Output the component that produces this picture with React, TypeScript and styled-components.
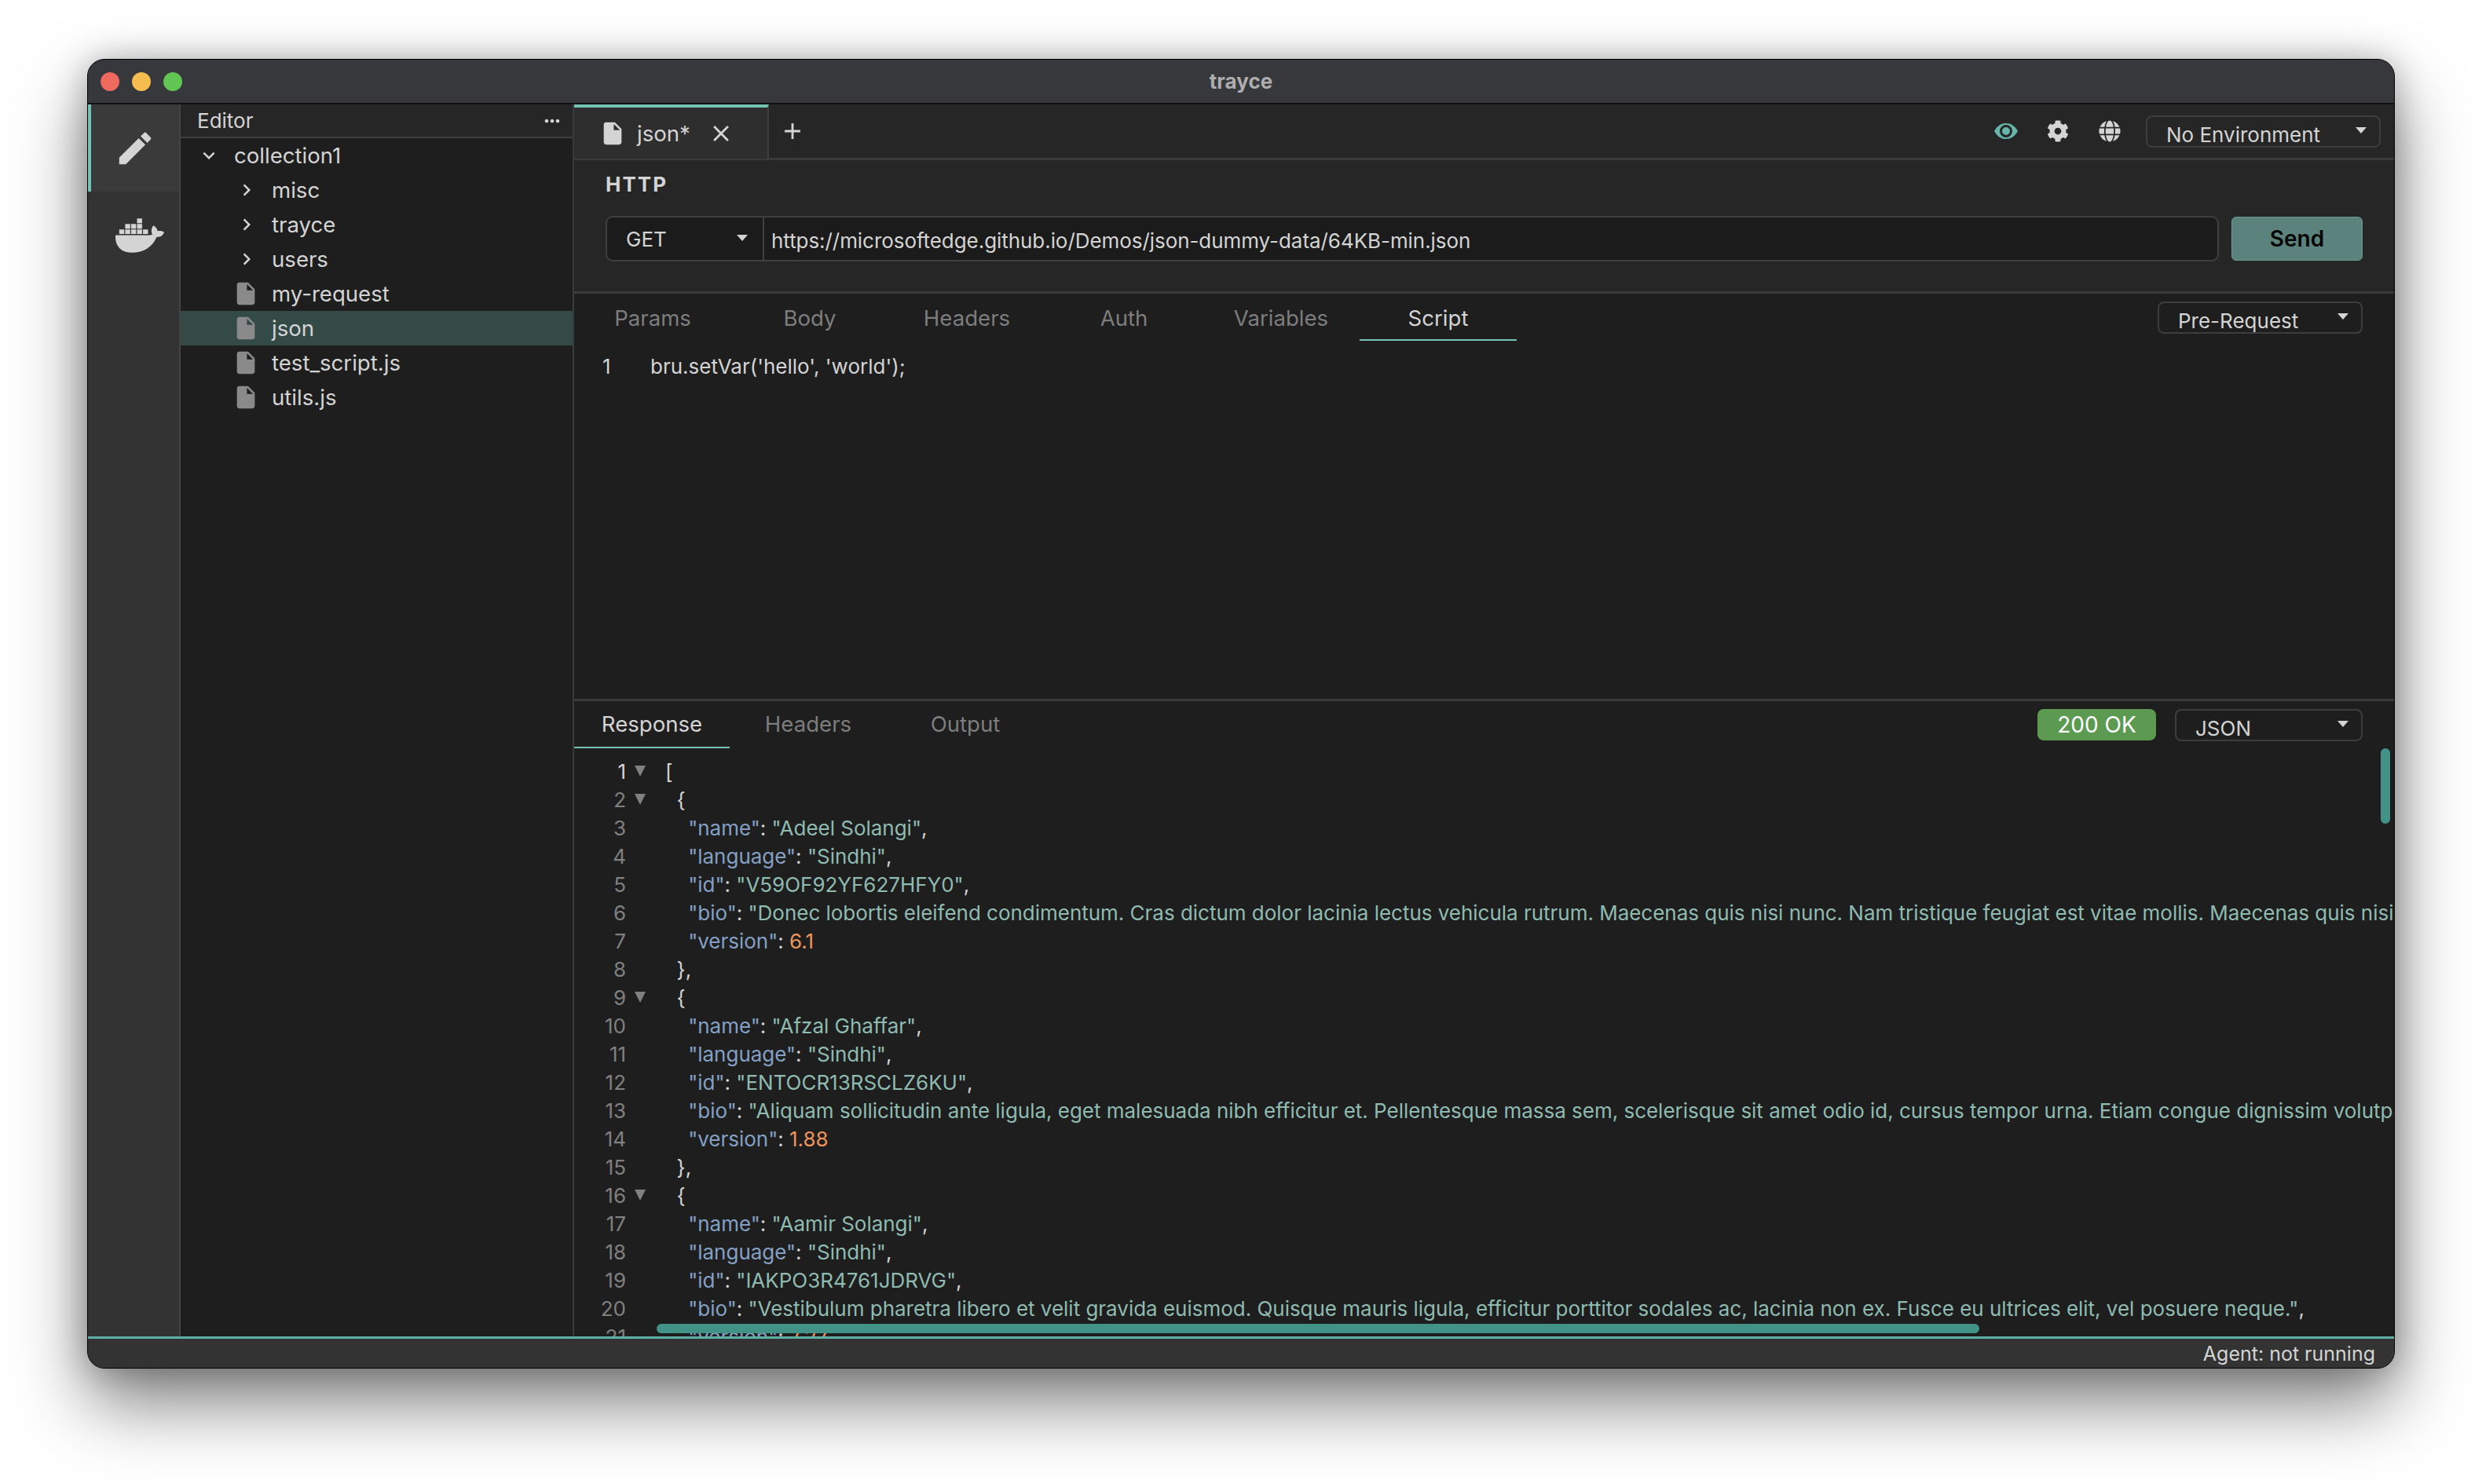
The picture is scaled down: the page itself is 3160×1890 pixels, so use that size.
import React from "react";
import styled, { createGlobalStyle } from "styled-components";
import { FaCog, FaDocker, FaGlobe } from "react-icons/fa";
import {
  MdAdd,
  MdChevronRight,
  MdClose,
  MdEdit,
  MdExpandMore,
  MdInsertDriveFile,
  MdMoreHoriz,
} from "react-icons/md";

const GlobalStyle = createGlobalStyle`
  html, body {
    margin: 0;
    padding: 0;
    background: #ffffff;
  }
  * {
    box-sizing: border-box;
  }
  body {
    font-family: Inter, "Noto Sans", sans-serif;
    -webkit-font-smoothing: antialiased;
  }
`;

const Page = styled.div`
  width: 3160px;
  height: 1890px;
  padding: 75px 111px 0 111px;
  overflow: hidden;
`;

const Window = styled.div`
  width: 2938px;
  height: 1668px;
  display: flex;
  flex-direction: column;
  border-radius: 22px;
  overflow: hidden;
  background: #1e1e1e;
  border: 1px solid #000;
  box-shadow: inset 0 0 0 1px #555, 0 44px 90px rgba(0, 0, 0, 0.5), 0 0 40px rgba(0, 0, 0, 0.25);
`;

const TitleBar = styled.div`
  position: relative;
  flex: 0 0 57px;
  display: flex;
  align-items: center;
  justify-content: center;
  background: #37383b;
  border-bottom: 2px solid #111;
`;

const Lights = styled.div`
  position: absolute;
  left: 16px;
  top: 16px;
  display: flex;
  gap: 16px;
`;

const Light = styled.span<{ $color: string }>`
  width: 24px;
  height: 24px;
  border-radius: 50%;
  background: ${(p) => p.$color};
`;

const Title = styled.div`
  font-size: 26px;
  font-weight: 700;
  color: #adadaf;
`;

const Body = styled.div`
  flex: 1;
  min-height: 0;
  display: flex;
`;

const ActivityBar = styled.div`
  flex: 0 0 118px;
  display: flex;
  flex-direction: column;
  background: #333333;
  border-right: 2px solid #444;
`;

const ActivityItem = styled.div<{ $active?: boolean }>`
  height: 111px;
  display: flex;
  align-items: center;
  justify-content: center;
  color: #d4d4d4;
  background: ${(p) => (p.$active ? "#3a3a3a" : "transparent")};
  border-left: 4px solid ${(p) => (p.$active ? "#74c2b6" : "transparent")};
`;

const DockerIcon = styled(FaDocker)`
  margin-left: 11px;
`;

const Sidebar = styled.div`
  flex: 0 0 501px;
  display: flex;
  flex-direction: column;
  background: #1e1e1e;
  border-right: 2px solid #3a3a3a;
`;

const SidebarHeader = styled.div`
  height: 43px;
  display: flex;
  align-items: center;
  justify-content: space-between;
  padding: 0 12px 0 21px;
  background: #262626;
  border-bottom: 2px solid #3d3d3d;
  font-size: 26px;
  color: #d4d4d4;
`;

const TreeRow = styled.div<{ $depth: number; $selected?: boolean }>`
  height: 44px;
  display: flex;
  align-items: center;
  padding-left: ${(p) => (p.$depth === 0 ? 21 : 69)}px;
  font-size: 27.6px;
  color: #d4d4d4;
  background: ${(p) => (p.$selected ? "#334a47" : "transparent")};
`;

const TreeIcon = styled.span`
  flex: 0 0 auto;
  width: 47px;
  display: flex;
  align-items: center;
  color: #d4d4d4;
`;

const FileIcon = styled(MdInsertDriveFile)`
  color: #8a8a8a;
  margin-left: -3px;
`;

const Main = styled.div`
  flex: 1;
  min-width: 0;
  display: flex;
  flex-direction: column;
`;

const TabBar = styled.div`
  flex: 0 0 71px;
  display: flex;
  align-items: stretch;
  background: #262626;
  border-bottom: 3px solid #3a3a3a;
`;

const FileTab = styled.div`
  width: 248px;
  display: flex;
  align-items: center;
  padding-left: 32px;
  margin-bottom: -1px;
  background: #2e2e2e;
  border-top: 4px solid #74c2b6;
  border-right: 2px solid #3d3d3d;
  font-size: 27.6px;
  color: #d4d4d4;
`;

const TabName = styled.span`
  margin-left: 14px;
  width: 90px;
`;

const AddTab = styled.div`
  width: 60px;
  display: flex;
  align-items: center;
  justify-content: center;
  color: #d4d4d4;
`;

const TabBarActions = styled.div`
  margin-left: auto;
  display: flex;
  align-items: center;
  padding-right: 17px;
  color: #d4d4d4;
`;

const ActionIcon = styled.span<{ $color?: string }>`
  width: 66px;
  display: flex;
  justify-content: center;
  color: ${(p) => p.$color ?? "#d4d4d4"};
`;

const Dropdown = styled.div<{ $width: number }>`
  width: ${(p) => p.$width}px;
  height: 41px;
  display: flex;
  align-items: flex-end;
  justify-content: space-between;
  padding: 0 16px 0 24px;
  border: 2px solid #3d3d3d;
  border-radius: 8px;
  font-size: 26px;
  line-height: 29px;
  color: #d4d4d4;
  overflow: hidden;
`;

const EnvDropdown = styled(Dropdown)`
  margin-left: 13px;
`;

const Caret = styled.span`
  align-self: center;
  margin-top: -3px;
  width: 0;
  height: 0;
  border-left: 7px solid transparent;
  border-right: 7px solid transparent;
  border-top: 8px solid #d4d4d4;
`;

const RequestPanel = styled.div`
  flex: 0 0 170px;
  padding: 15px 40px 0;
  background: #262626;
  border-bottom: 3px solid #3a3a3a;
`;

const SectionTitle = styled.div`
  font-size: 26px;
  line-height: 32px;
  font-weight: 700;
  letter-spacing: 2px;
  color: #d4d4d4;
`;

const UrlRow = styled.div`
  margin-top: 24px;
  display: flex;
  align-items: center;
  gap: 16px;
`;

const UrlField = styled.div`
  flex: 1;
  height: 58px;
  display: flex;
  background: #1b1b1b;
  border: 2px solid #3f3f3f;
  border-radius: 9px;
  font-size: 26px;
  color: #d4d4d4;
`;

const MethodSelect = styled.div`
  flex: 0 0 200px;
  display: flex;
  align-items: center;
  justify-content: space-between;
  padding: 0 19px 0 24px;
  border-right: 2px solid #3f3f3f;
`;

const UrlText = styled.div`
  padding: 4px 0 0 9px;
  display: flex;
  align-items: center;
  letter-spacing: -0.06px;
`;

const SendButton = styled.div`
  flex: 0 0 167px;
  height: 56px;
  display: flex;
  align-items: center;
  justify-content: center;
  background: #5b827c;
  border: 1px solid #6d9a93;
  border-radius: 6px;
  font-size: 28px;
  font-weight: 600;
  color: #050505;
`;

const TabRow = styled.div`
  flex: 0 0 60px;
  display: flex;
  align-items: stretch;
  background: #1e1e1e;
`;

const PanelTab = styled.div<{ $active?: boolean; $width?: number }>`
  width: ${(p) => p.$width ?? 200}px;
  display: flex;
  align-items: center;
  justify-content: center;
  font-size: 27.6px;
  color: ${(p) => (p.$active ? "#d4d4d4" : "#7d7d7d")};
  border-bottom: 2px solid ${(p) => (p.$active ? "#74c2b6" : "transparent")};
`;

const RequestTab = styled(PanelTab)`
  padding-top: 3px;
`;

const RowEnd = styled.div`
  margin-left: auto;
  display: flex;
  align-items: center;
  gap: 24px;
  padding-right: 40px;
`;

const EditorPane = styled.div`
  flex: 1;
  min-height: 0;
  display: flex;
  flex-direction: column;
  background: #1e1e1e;
  border-bottom: 3px solid #3a3a3a;
`;

const ScriptRow = styled.div`
  flex: 0 0 60px;
  padding: 17px 0 0 36px;
  display: flex;
  font-size: 26px;
  line-height: 32px;
  color: #d4d4d4;
`;

const ScriptLineNo = styled.span`
  width: 61px;
`;

const ResponsePane = styled.div`
  flex: 0 0 809px;
  min-height: 0;
  display: flex;
  flex-direction: column;
  background: #1e1e1e;
`;

const CodeView = styled.div`
  position: relative;
  flex: 1;
  min-height: 0;
  padding-top: 12px;
  overflow: hidden;
`;

const CodeLine = styled.div`
  height: 36px;
  display: flex;
  font-size: 26px;
  line-height: 36px;
  letter-spacing: -0.02px;
  white-space: pre;
`;

const LineNo = styled.span<{ $current?: boolean }>`
  flex: 0 0 66px;
  text-align: right;
  color: ${(p) => (p.$current ? "#d4d4d4" : "#808080")};
`;

const FoldSlot = styled.span`
  flex: 0 0 50px;
  padding: 10px 0 0 11px;
`;

const FoldMark = styled.span`
  display: block;
  width: 0;
  height: 0;
  border-left: 7px solid transparent;
  border-right: 7px solid transparent;
  border-top: 14px solid #808080;
`;

const Key = styled.span`
  color: #84a0c4;
`;

const Str = styled.span`
  color: #8fbbb1;
`;

const Num = styled.span`
  color: #ef955c;
`;

const Punct = styled.span`
  color: #d4d4d4;
`;

const VScrollThumb = styled.div`
  position: absolute;
  top: 0;
  right: 5px;
  width: 12px;
  height: 96px;
  border-radius: 6px;
  background: #429287;
`;

const HScrollThumb = styled.div`
  position: absolute;
  left: 105px;
  bottom: 4px;
  width: 1684px;
  height: 12px;
  border-radius: 6px;
  background: #429287;
`;

const StatusBadge = styled.div`
  width: 151px;
  height: 40px;
  display: flex;
  align-items: center;
  justify-content: center;
  border-radius: 8px;
  background: #5b9a50;
  font-size: 28px;
  color: #fff;
`;

const StatusBar = styled.div`
  flex: 0 0 40px;
  display: flex;
  align-items: center;
  justify-content: flex-end;
  padding-right: 24px;
  background: #333333;
  border-top: 3px solid #5fb0a4;
  font-size: 25px;
  color: #d4d4d4;
`;

const EyeIcon = () => (
  <svg width="30" height="20" viewBox="0 0 30 20">
    <path d="M0 10C4 3 9 0 15 0s11 3 15 10c-4 7-9 10-15 10S4 17 0 10z" fill="currentColor" />
    <circle cx="15" cy="10" r="6.5" fill="none" stroke="#262626" strokeWidth="3" />
  </svg>
);

type Token = [kind: "k" | "s" | "n" | "p", text: string];

const entry = (
  name: string,
  id: string,
  bio: string,
  version: string,
  last: string
): Token[][] => [
  [["p", "  {"]],
  [["p", "    "], ["k", '"name"'], ["p", ": "], ["s", `"${name}"`], ["p", ","]],
  [["p", "    "], ["k", '"language"'], ["p", ": "], ["s", '"Sindhi"'], ["p", ","]],
  [["p", "    "], ["k", '"id"'], ["p", ": "], ["s", `"${id}"`], ["p", ","]],
  [["p", "    "], ["k", '"bio"'], ["p", ": "], ["s", `"${bio}"`], ["p", ","]],
  [["p", "    "], ["k", '"version"'], ["p", ": "], ["n", version]],
  [["p", last]],
];

const codeLines: Token[][] = [
  [["p", "["]],
  ...entry(
    "Adeel Solangi",
    "V59OF92YF627HFY0",
    "Donec lobortis eleifend condimentum. Cras dictum dolor lacinia lectus vehicula rutrum. Maecenas quis nisi nunc. Nam tristique feugiat est vitae mollis. Maecenas quis nisi nunc.",
    "6.1",
    "  },"
  ),
  ...entry(
    "Afzal Ghaffar",
    "ENTOCR13RSCLZ6KU",
    "Aliquam sollicitudin ante ligula, eget malesuada nibh efficitur et. Pellentesque massa sem, scelerisque sit amet odio id, cursus tempor urna. Etiam congue dignissim volutpat. Vestibulum pharetra libero et velit gravida euismod.",
    "1.88",
    "  },"
  ),
  ...entry(
    "Aamir Solangi",
    "IAKPO3R4761JDRVG",
    "Vestibulum pharetra libero et velit gravida euismod. Quisque mauris ligula, efficitur porttitor sodales ac, lacinia non ex. Fusce eu ultrices elit, vel posuere neque.",
    "7.27",
    "  },"
  ),
];

const foldLines = [1, 2, 9, 16];

const renderToken = ([kind, text]: Token, i: number) => {
  if (kind === "k") return <Key key={i}>{text}</Key>;
  if (kind === "s") return <Str key={i}>{text}</Str>;
  if (kind === "n") return <Num key={i}>{text}</Num>;
  return <Punct key={i}>{text}</Punct>;
};

const treeItems = [
  { name: "misc", folder: true },
  { name: "trayce", folder: true },
  { name: "users", folder: true },
  { name: "my-request" },
  { name: "json", selected: true },
  { name: "test_script.js" },
  { name: "utils.js" },
];

const App = () => {
  return (
    <Page>
      <GlobalStyle />
      <Window>
        <TitleBar>
          <Lights>
            <Light $color="#ee6a5f" />
            <Light $color="#f5bd4f" />
            <Light $color="#61c554" />
          </Lights>
          <Title>trayce</Title>
        </TitleBar>
        <Body>
          <ActivityBar>
            <ActivityItem $active>
              <MdEdit size={54} />
            </ActivityItem>
            <ActivityItem>
              <DockerIcon size={62} />
            </ActivityItem>
          </ActivityBar>
          <Sidebar>
            <SidebarHeader>
              Editor
              <MdMoreHoriz size={28} />
            </SidebarHeader>
            <TreeRow $depth={0}>
              <TreeIcon>
                <MdExpandMore size={30} />
              </TreeIcon>
              collection1
            </TreeRow>
            {treeItems.map((item) => (
              <TreeRow key={item.name} $depth={1} $selected={item.selected}>
                <TreeIcon>
                  {item.folder ? <MdChevronRight size={30} /> : <FileIcon size={34} />}
                </TreeIcon>
                {item.name}
              </TreeRow>
            ))}
          </Sidebar>
          <Main>
            <TabBar>
              <FileTab>
                <MdInsertDriveFile size={34} />
                <TabName>json*</TabName>
                <MdClose size={34} />
              </FileTab>
              <AddTab>
                <MdAdd size={34} />
              </AddTab>
              <TabBarActions>
                <ActionIcon $color="#66b5a9">
                  <EyeIcon />
                </ActionIcon>
                <ActionIcon>
                  <FaCog size={28} />
                </ActionIcon>
                <ActionIcon>
                  <FaGlobe size={28} />
                </ActionIcon>
                <EnvDropdown $width={299}>
                  No Environment
                  <Caret />
                </EnvDropdown>
              </TabBarActions>
            </TabBar>
            <RequestPanel>
              <SectionTitle>HTTP</SectionTitle>
              <UrlRow>
                <UrlField>
                  <MethodSelect>
                    GET
                    <Caret />
                  </MethodSelect>
                  <UrlText>https://microsoftedge.github.io/Demos/json-dummy-data/64KB-min.json</UrlText>
                </UrlField>
                <SendButton>Send</SendButton>
              </UrlRow>
            </RequestPanel>
            <EditorPane>
              <TabRow>
                <RequestTab>Params</RequestTab>
                <RequestTab>Body</RequestTab>
                <RequestTab>Headers</RequestTab>
                <RequestTab>Auth</RequestTab>
                <RequestTab>Variables</RequestTab>
                <RequestTab $active>Script</RequestTab>
                <RowEnd>
                  <Dropdown $width={261}>
                    Pre-Request
                    <Caret />
                  </Dropdown>
                </RowEnd>
              </TabRow>
              <ScriptRow>
                <ScriptLineNo>1</ScriptLineNo>
                bru.setVar('hello', 'world');
              </ScriptRow>
            </EditorPane>
            <ResponsePane>
              <TabRow>
                <PanelTab $active $width={198}>Response</PanelTab>
                <PanelTab $width={200}>Headers</PanelTab>
                <PanelTab $width={200}>Output</PanelTab>
                <RowEnd>
                  <StatusBadge>200 OK</StatusBadge>
                  <Dropdown $width={239}>
                    JSON
                    <Caret />
                  </Dropdown>
                </RowEnd>
              </TabRow>
              <CodeView>
                {codeLines.map((tokens, i) => (
                  <CodeLine key={i}>
                    <LineNo $current={i === 0}>{i + 1}</LineNo>
                    <FoldSlot>{foldLines.includes(i + 1) && <FoldMark />}</FoldSlot>
                    {tokens.map(renderToken)}
                  </CodeLine>
                ))}
                <VScrollThumb />
                <HScrollThumb />
              </CodeView>
            </ResponsePane>
          </Main>
        </Body>
        <StatusBar>Agent: not running</StatusBar>
      </Window>
    </Page>
  );
};

export default App;
